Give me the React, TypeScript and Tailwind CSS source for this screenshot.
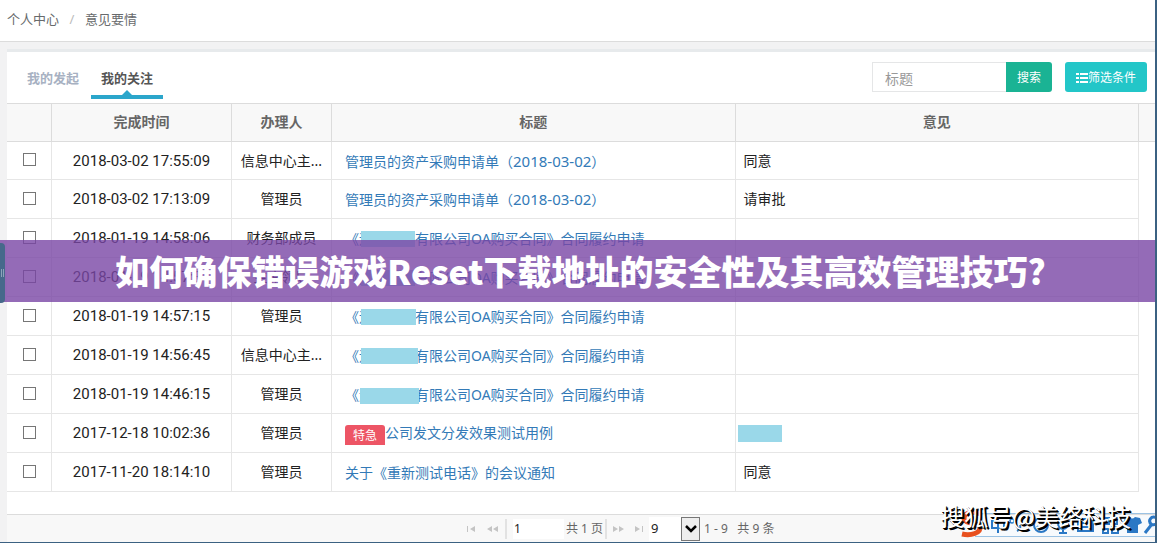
import type { ReactNode } from 'react'

type Row = {
  time: string
  person: string
  title: ReactNode
  opinion?: ReactNode
}

const Contract = ({ mask }: { mask: string }) => (
  <>
    《
    <span className="relative inline-block w-14">
      远
      <span className={`absolute bg-[#9ad8e9] ${mask}`} />
    </span>
    有限公司OA购买合同》合同履约申请
  </>
)

const purchase = (
  <>
    管理员的资产采购申请单（<span className="text-[15px]">2018-03-02</span>）
  </>
)

const rows: Row[] = [
  { time: '2018-03-02 17:55:09', person: '信息中心主...', title: purchase, opinion: '同意' },
  { time: '2018-03-02 17:13:09', person: '管理员', title: purchase, opinion: '请审批' },
  { time: '2018-01-19 14:58:06', person: '财务部成员', title: <Contract mask="left-[2px] top-0.5 h-4 w-[54px]" /> },
  { time: '2018-01-19 14:57:31', person: '主席领导', title: <Contract mask="left-[2px] top-0.5 h-4 w-[54px]" /> },
  { time: '2018-01-19 14:57:15', person: '管理员', title: <Contract mask="left-[2px] top-0.5 h-4 w-[55px]" /> },
  { time: '2018-01-19 14:56:45', person: '信息中心主...', title: <Contract mask="left-[2px] top-0.5 h-4 w-[57px]" /> },
  { time: '2018-01-19 14:46:15', person: '管理员', title: <Contract mask="left-px top-[3px] h-4 w-[59px]" /> },
  {
    time: '2017-12-18 10:02:36',
    person: '管理员',
    title: (
      <>
        <span className="inline-block h-5 w-10 rounded-t-[3px] bg-[#ed5565] text-center align-middle text-xs leading-[22px] text-white">特急</span>
        公司发文分发效果测试用例
      </>
    ),
    opinion: <span className="-ml-1.5 block h-[17px] w-11 bg-[#9ad8e9]" />,
  },
  { time: '2017-11-20 18:14:10', person: '管理员', title: '关于《重新测试电话》的会议通知', opinion: '同意' },
]

const headers = ['', '完成时间', '办理人', '标题', '意见']

function Pager({ children, label }: { children: ReactNode; label: string }) {
  return (
    <button type="button" aria-label={label} className="text-[#c4c4c4]">
      <svg width="12" height="6" viewBox="0 0 12 8" preserveAspectRatio="none" fill="currentColor">{children}</svg>
    </button>
  )
}

function ImeBar() {
  return (
    <svg width="196" height="34" viewBox="0 0 196 34" fill="none" stroke="#2b78c5" strokeWidth="2">
      <path d="M16 8H196V28H16Z" fill="#f7fafd" stroke="none" />
      <path d="M16 5.5H196M16 28.5H196" stroke="#9cc3e4" strokeWidth="1" />
      <path d="M22 6C12 2 4 6 5 11C6 16 19 14 21 19C22 25 12 28 3 26" stroke="#e8501e" strokeWidth="5" />
      <path d="M33 13H45V20H33ZM39 9V25" />
      <circle cx="53" cy="13" r="2" strokeWidth="1.5" />
      <path d="M61 17C62 20 60 22 58 23" />
      <circle cx="82" cy="17" r="7" />
      <path d="M78 18C80 22 84 22 86 18" />
      <path d="M104 9V18M99 15C99 23 109 23 109 15M104 21V25M100 25H108" />
      <path d="M119 11H134V23H119ZM122 15H131M122 19H131" />
      <path d="M144 10H150V16H144ZM154 10H158V16H154ZM144 21H149V25H144ZM153 19H159V25H153Z" />
      <path d="M166 10L171 9Q173 12 176 9L181 10L183 15L179 17V25H168V17L164 15Z" fill="#2b78c5" stroke="none" />
      <path d="M186 25L193 16M198 10C192 7 188 13 193 17L199 16" strokeWidth="3" />
    </svg>
  )
}

export default function App() {
  return (
    <div className="relative overflow-hidden border-r-2 border-b-2 border-[#3b6182] bg-[#f2f2f3] font-['Noto_Sans','Noto_Sans_CJK_SC',sans-serif] text-sm text-[#222]">
      <nav className="flex h-[42px] items-center gap-2 border-b border-[#dcdcdc] bg-white px-[7px] pb-0.5 text-[13px] text-[#676a6c]">
        <a href="#">个人中心</a>
        <span className="w-[10px] text-center text-[#bbb]">/</span>
        <a href="#">意见要情</a>
      </nav>

      <main className="mt-[7px] ml-[7px] border-t-[3px] border-[#e7eaec] bg-white">
        <div className="flex h-[51px] justify-between px-2">
          <div className="flex h-[47px] text-[13px] font-bold">
            <button type="button" className="w-[76px] pt-1.5 text-[#a7b1c2]">我的发起</button>
            <button type="button" className="relative w-[72px] border-b-4 border-[#2ba6cb] pt-2.5 text-[#555]">
              我的关注
              <svg className="absolute bottom-0 left-[31px]" width="10" height="5" viewBox="0 0 10 5" fill="#2ba6cb">
                <path d="M0 5L5 0L10 5Z" />
              </svg>
            </button>
          </div>
          <form className="mt-[10px] flex h-[30px] items-stretch self-start text-xs text-white">
            <input aria-label="标题" placeholder="标题" className="w-[134px] border border-r-0 border-[#e5e6e7] bg-white px-3 pt-1 text-sm text-[#555] placeholder:text-[#999] outline-none" />
            <button type="button" className="w-[46px] rounded-r-[3px] bg-[#1ab394] pt-0.5">搜索</button>
            <button type="button" className="ml-[13px] flex w-[82px] items-center justify-center rounded-[3px] bg-[#23c6c8] pt-0.5">
              <svg width="12" height="10" viewBox="0 0 12 10" fill="currentColor">
                <path d="M0 0h3v2H0zM4 0h8v2H4zM0 4h3v2H0zM4 4h8v2H4zM0 8h3v2H0zM4 8h8v2H4z" />
              </svg>
              筛选条件
            </button>
          </form>
        </div>

        <table className="w-full table-fixed border-separate border-spacing-0">
          <colgroup>
            <col className="w-[45px]" />
            <col className="w-[180px]" />
            <col className="w-[100px]" />
            <col />
            <col />
            <col className="w-4" />
          </colgroup>
          <thead>
            <tr className="h-[39px] bg-[#f8f8f8] text-[#666]">
              {headers.map((h, i) => (
                <th key={i} className="border-y border-r border-[#dcdcdc] p-0 pb-0.5">{h}</th>
              ))}
              <th className="border-y border-[#dcdcdc] p-0" />
            </tr>
          </thead>
          <tbody>
            {rows.map((r) => (
              <tr key={r.time} className="h-[39px] first:h-[38px] [&>td]:border-[#e6e6e6] [&>td:not(:last-child)]:border-r [&>td:not(:last-child)]:border-b">
                <td className="p-0 pb-0.5">
                  <input type="checkbox" aria-label={r.time} className="mx-auto block size-[13px] appearance-none border border-[#767676] bg-white" />
                </td>
                <td className="p-0 pt-0.5 text-center font-[Roboto] text-[15px]">{r.time}</td>
                <td className="p-0 text-center whitespace-nowrap">{r.person}</td>
                <td className="p-0 pt-0.5 pl-[13px] whitespace-nowrap">
                  <a href="#" className="text-[#337ab7]">{r.title}</a>
                </td>
                <td className="p-0 pl-2">{r.opinion}</td>
                <td className="p-0" />
              </tr>
            ))}
          </tbody>
        </table>

        <footer className="mt-[22px] flex h-7 items-center border-t border-[#dcdcdc] bg-[#f8f8f8] pl-[460px] text-xs whitespace-pre text-[#666]">
          <div className="flex gap-2">
            <Pager label="首页"><path d="M0 0h1v8H0zM8 0v8L3 4z" /></Pager>
            <Pager label="上一页"><path d="M5 0v8L0 4zM11 0v8L6 4z" /></Pager>
          </div>
          <span className="ml-1.5 h-5 w-0.5 bg-[#e2e2e2]" />
          <input aria-label="页码" defaultValue="1" className="ml-1.5 h-5 w-[51px] bg-white px-px text-[#222]" />
          <span className="ml-0.5">共 1 页</span>
          <span className="ml-0.5 h-5 w-0.5 bg-[#e2e2e2]" />
          <div className="ml-1.5 flex gap-2">
            <Pager label="下一页"><path d="M0 0v8l5-4zM6 0v8l5-4z" /></Pager>
            <Pager label="末页"><path d="M2 0v8l5-4zM9 0h1v8H9z" /></Pager>
          </div>
          <div className="relative ml-1 h-6 w-[51px]">
            <select aria-label="每页条数" className="h-full w-full appearance-none bg-white pl-0.5 text-[13px] text-[#222]">
              <option>9</option>
            </select>
            <span className="pointer-events-none absolute inset-y-0 right-0 flex w-[19px] items-center justify-center border border-[#777] bg-[#eee]">
              <svg width="12" height="8" viewBox="0 0 12 8" fill="none" stroke="#000" strokeWidth="2.5">
                <path d="M1 1L6 6L11 1" />
              </svg>
            </span>
          </div>
          <span className="ml-1">1 - 9   共 9 条</span>
        </footer>
      </main>

      <div className="absolute top-60 right-0 left-0 flex h-[62px] items-center justify-center bg-[#7946a5]/80 pl-1.5 font-['Noto_Sans_CJK_SC',sans-serif] text-[34px] font-black whitespace-nowrap text-white">
        如何确保错误游戏Reset下载地址的安全性及其高效管理技巧?
      </div>
      <button type="button" aria-label="展开" className="absolute top-[243px] left-0 flex h-[60px] w-[5px] items-center justify-center gap-px rounded-r-sm bg-[#46698b]">
        <span className="h-2 w-px bg-[#8ba4ba]" />
        <span className="h-2 w-px bg-[#8ba4ba]" />
      </button>

      <div className="absolute right-0 bottom-0">
        <ImeBar />
      </div>
      <div className="absolute right-6 bottom-2.5 font-['Noto_Sans_CJK_SC',sans-serif] text-2xl leading-8 text-white [text-shadow:1px_1px_0_#000,2px_2px_0_#000]">
        搜狐号@美络科技
      </div>
    </div>
  )
}
